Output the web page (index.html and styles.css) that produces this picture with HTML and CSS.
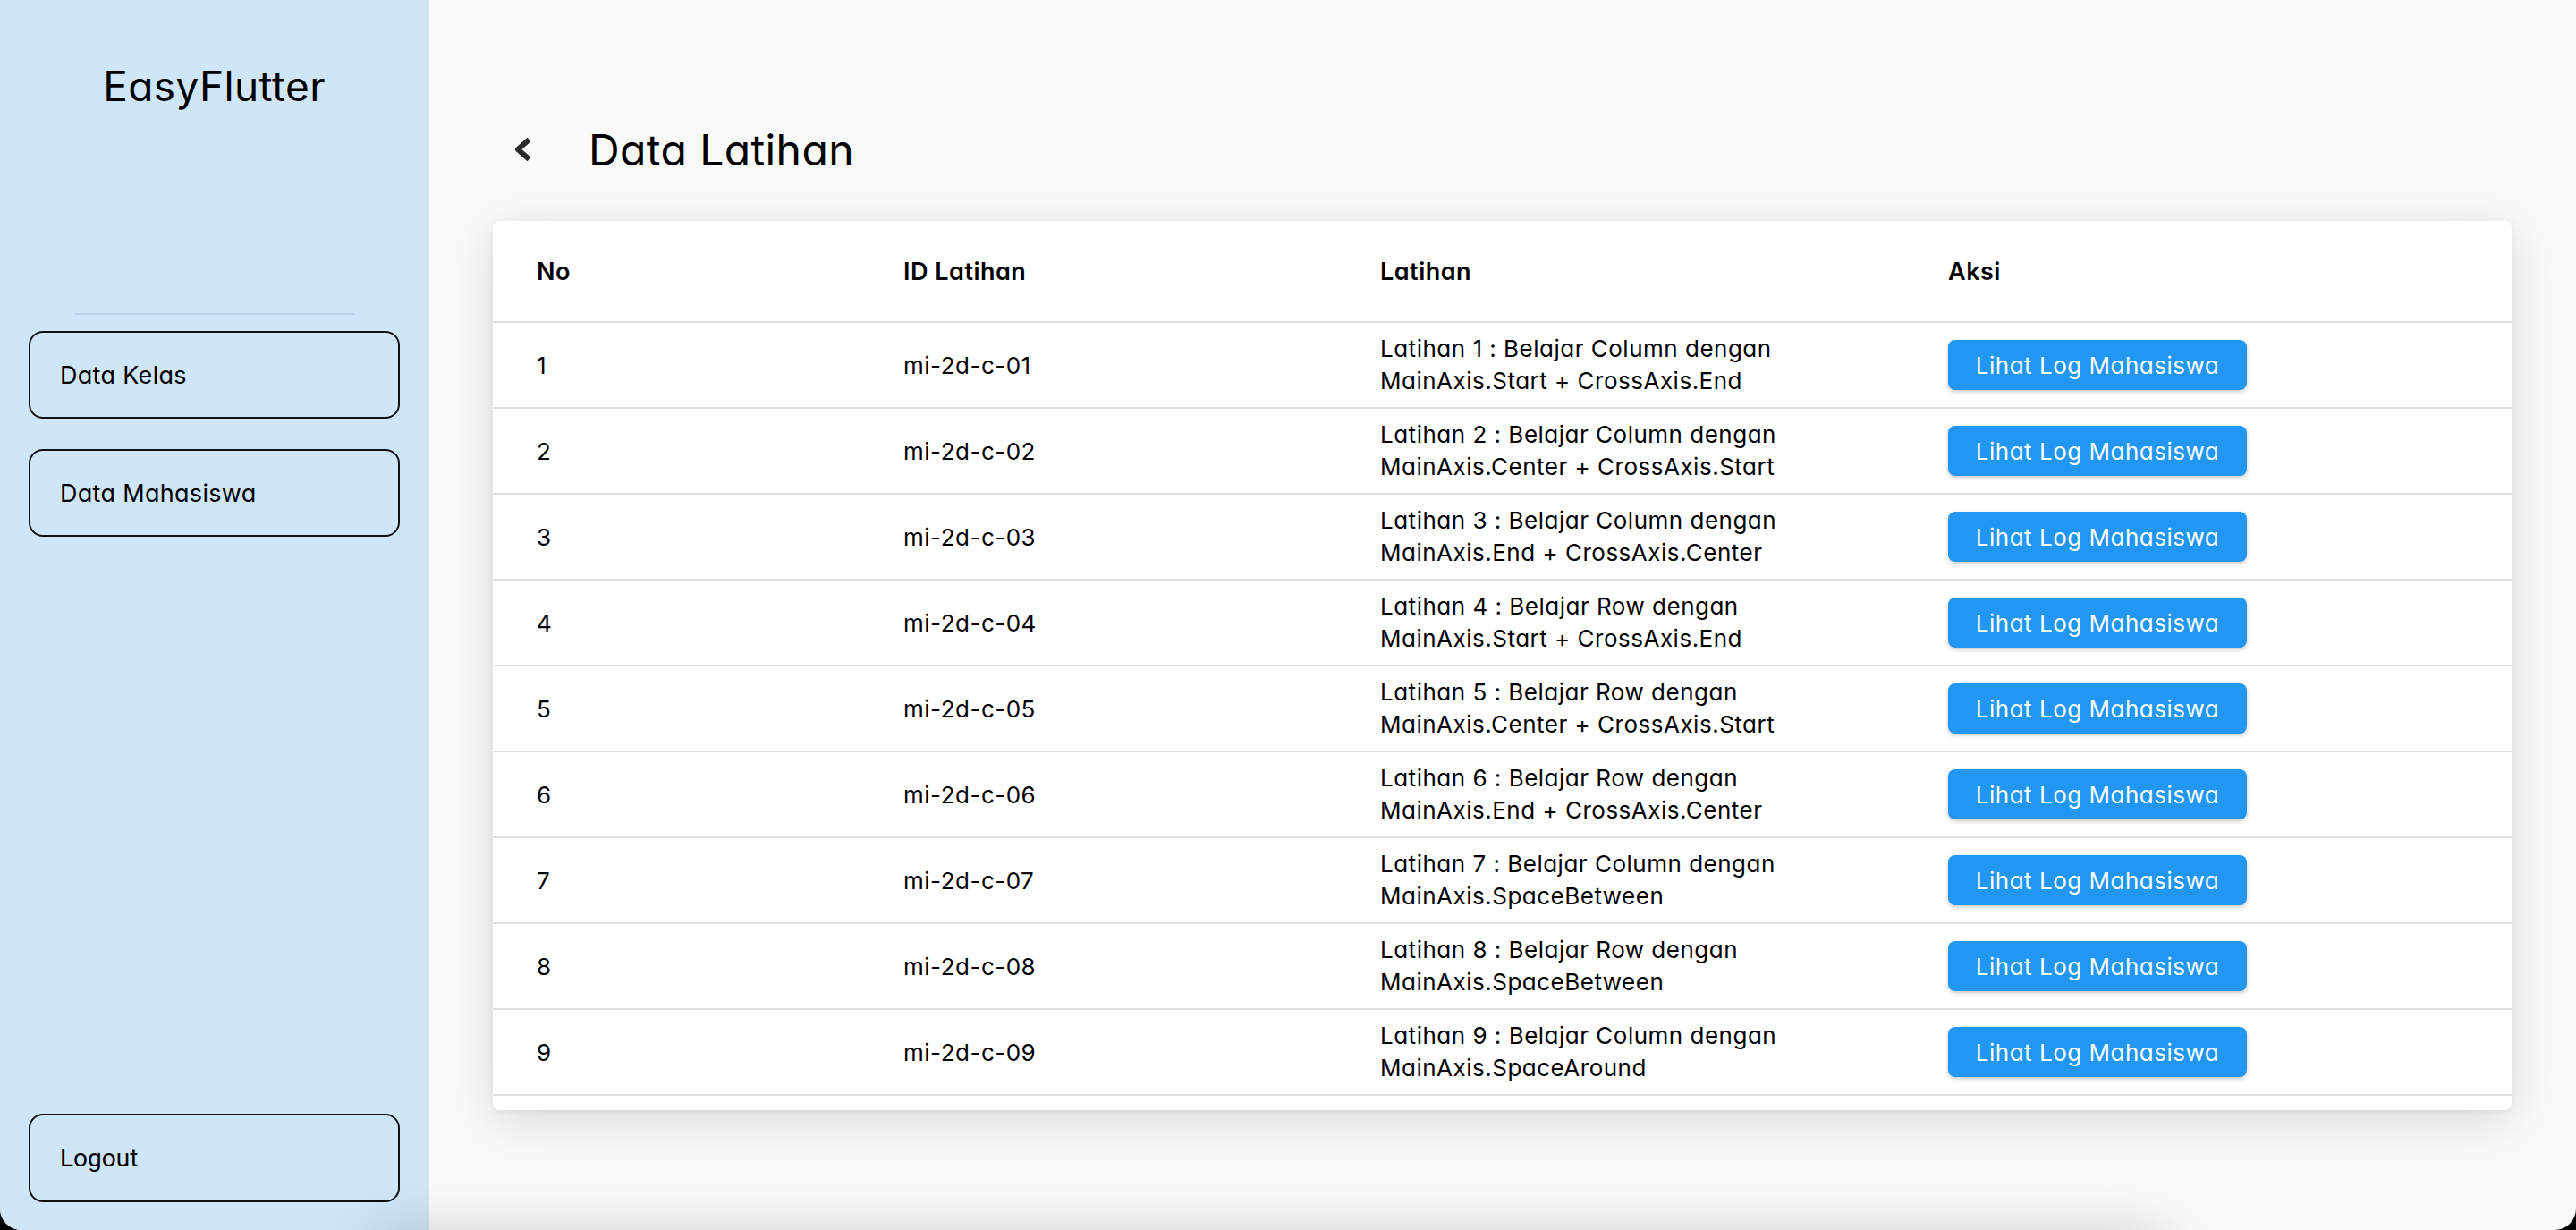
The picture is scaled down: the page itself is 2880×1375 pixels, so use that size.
FILE: index.html
```html
<!DOCTYPE html>
<html lang="id">
<head>
<meta charset="utf-8">
<title>Data Latihan</title>
<link rel="stylesheet" href="styles.css">
</head>
<body>
<div class="app">
  <aside class="sidebar">
    <div class="brand-area">
      <div class="brand">EasyFlutter</div>
      <div class="divider"></div>
    </div>
    <nav class="nav">
      <div class="nav-btn">Data Kelas</div>
      <div class="nav-btn">Data Mahasiswa</div>
    </nav>
    <div class="spacer"></div>
    <div class="nav-btn logout">Logout</div>
  </aside>
  <main class="main">
    <div class="page-head">
      <svg class="back" viewBox="0 0 24 30" width="24" height="30"><polyline points="18.5,4 6,15 18.5,26" fill="none" stroke="#2b2b2b" stroke-width="6" stroke-linecap="butt" stroke-linejoin="round"/></svg>
      <h1 class="title">Data Latihan</h1>
    </div>
    <section class="card">
      <div class="row head"><div>No</div><div>ID Latihan</div><div>Latihan</div><div>Aksi</div></div>
      <div class="row"><div>1</div><div>mi-2d-c-01</div><div class="desc"><span>Latihan 1 : Belajar Column dengan</span><span>MainAxis.Start + CrossAxis.End</span></div><div><button class="btn">Lihat Log Mahasiswa</button></div></div>
      <div class="row"><div>2</div><div>mi-2d-c-02</div><div class="desc"><span>Latihan 2 : Belajar Column dengan</span><span>MainAxis.Center + CrossAxis.Start</span></div><div><button class="btn">Lihat Log Mahasiswa</button></div></div>
      <div class="row"><div>3</div><div>mi-2d-c-03</div><div class="desc"><span>Latihan 3 : Belajar Column dengan</span><span>MainAxis.End + CrossAxis.Center</span></div><div><button class="btn">Lihat Log Mahasiswa</button></div></div>
      <div class="row"><div>4</div><div>mi-2d-c-04</div><div class="desc"><span>Latihan 4 : Belajar Row dengan</span><span>MainAxis.Start + CrossAxis.End</span></div><div><button class="btn">Lihat Log Mahasiswa</button></div></div>
      <div class="row"><div>5</div><div>mi-2d-c-05</div><div class="desc"><span>Latihan 5 : Belajar Row dengan</span><span>MainAxis.Center + CrossAxis.Start</span></div><div><button class="btn">Lihat Log Mahasiswa</button></div></div>
      <div class="row"><div>6</div><div>mi-2d-c-06</div><div class="desc"><span>Latihan 6 : Belajar Row dengan</span><span>MainAxis.End + CrossAxis.Center</span></div><div><button class="btn">Lihat Log Mahasiswa</button></div></div>
      <div class="row"><div>7</div><div>mi-2d-c-07</div><div class="desc"><span>Latihan 7 : Belajar Column dengan</span><span>MainAxis.SpaceBetween</span></div><div><button class="btn">Lihat Log Mahasiswa</button></div></div>
      <div class="row"><div>8</div><div>mi-2d-c-08</div><div class="desc"><span>Latihan 8 : Belajar Row dengan</span><span>MainAxis.SpaceBetween</span></div><div><button class="btn">Lihat Log Mahasiswa</button></div></div>
      <div class="row"><div>9</div><div>mi-2d-c-09</div><div class="desc"><span>Latihan 9 : Belajar Column dengan</span><span>MainAxis.SpaceAround</span></div><div><button class="btn">Lihat Log Mahasiswa</button></div></div>
      <div class="row"><div>10</div><div>mi-2d-c-10</div><div class="desc"><span>Latihan 10 : Belajar Row dengan</span><span>MainAxis.SpaceAround</span></div><div><button class="btn">Lihat Log Mahasiswa</button></div></div>
    </section>
  </main>
  <div class="bottom-shade"></div>
</div>
</body>
</html>
```
FILE: styles.css
```css
html, body {
  margin: 0;
  padding: 0;
  background: #000;
}
body {
  font-family: Inter, "Noto Sans", sans-serif;
  font-feature-settings: "cv11";
  color: #000;
}
.app {
  position: relative;
  display: flex;
  width: 2880px;
  height: 1375px;
  background: #fafafa;
  border-radius: 0 0 24px 24px;
  overflow: hidden;
}
.sidebar {
  width: 480px;
  flex: none;
  box-sizing: border-box;
  background: #cfe5f8;
  display: flex;
  flex-direction: column;
  padding: 0 33px 31px 32px;
}
.brand-area {
  height: 352px;
  display: flex;
  flex-direction: column;
}
.brand {
  margin-top: 66px;
  line-height: 60px;
  font-size: 46px;
  letter-spacing: 0.4px;
  text-align: center;
}
.divider {
  margin: auto 50px 0 51px;
  height: 2px;
  background: #bdd2e6;
}
.nav {
  display: flex;
  flex-direction: column;
  gap: 34px;
  margin-top: 18px;
}
.nav-btn {
  height: 98px;
  box-sizing: border-box;
  border: 2px solid #111;
  border-radius: 16px;
  display: flex;
  align-items: center;
  padding-left: 33px;
  font-size: 27px;
  letter-spacing: 0.3px;
}
.spacer { flex: 1; }
.logout {
  height: 99px;
  font-family: Roboto, "Liberation Sans", sans-serif;
  font-feature-settings: normal;
  font-size: 28px;
  letter-spacing: 0;
}
.main {
  flex: 1;
  display: flex;
  flex-direction: column;
  padding: 127px 72px 0 71px;
  min-width: 0;
}
.page-head {
  height: 80px;
  display: flex;
  align-items: center;
}
.back {
  margin-left: 22px;
  flex: none;
}
.title {
  margin: 0 0 0 61px;
  font-size: 48px;
  letter-spacing: 0.4px;
  font-weight: 400;
}
.card {
  margin-top: 40px;
  height: 994px;
  background: #fff;
  border-radius: 8px;
  overflow: hidden;
  box-shadow: 0 12px 60px rgba(0,0,0,0.13), 0 2px 8px rgba(0,0,0,0.06);
}
.row {
  display: grid;
  grid-template-columns: 410px 533px 635px 1fr;
  align-items: center;
  padding-left: 49px;
  height: 96px;
  box-sizing: border-box;
  border-bottom: 2px solid #e0e0e0;
  font-size: 26px;
  letter-spacing: 0.5px;
}
.row.head {
  height: 114px;
  font-size: 27px;
  font-weight: 600;
}
.desc {
  display: flex;
  flex-direction: column;
  line-height: 36px;
}
.btn {
  width: 334px;
  height: 56px;
  border: none;
  border-radius: 8px;
  background: #2196f3;
  color: #fff;
  font-family: inherit;
  font-feature-settings: "cv11";
  font-size: 26px;
  letter-spacing: 0.5px;
  box-shadow: 0 2px 5px rgba(0,0,0,0.22);
  padding: 0;
}
.bottom-shade {
  position: absolute;
  left: 420px;
  width: 2000px;
  top: 1395px;
  height: 100px;
  box-shadow: 0 -10px 70px rgba(0,0,0,0.22);
}
```
